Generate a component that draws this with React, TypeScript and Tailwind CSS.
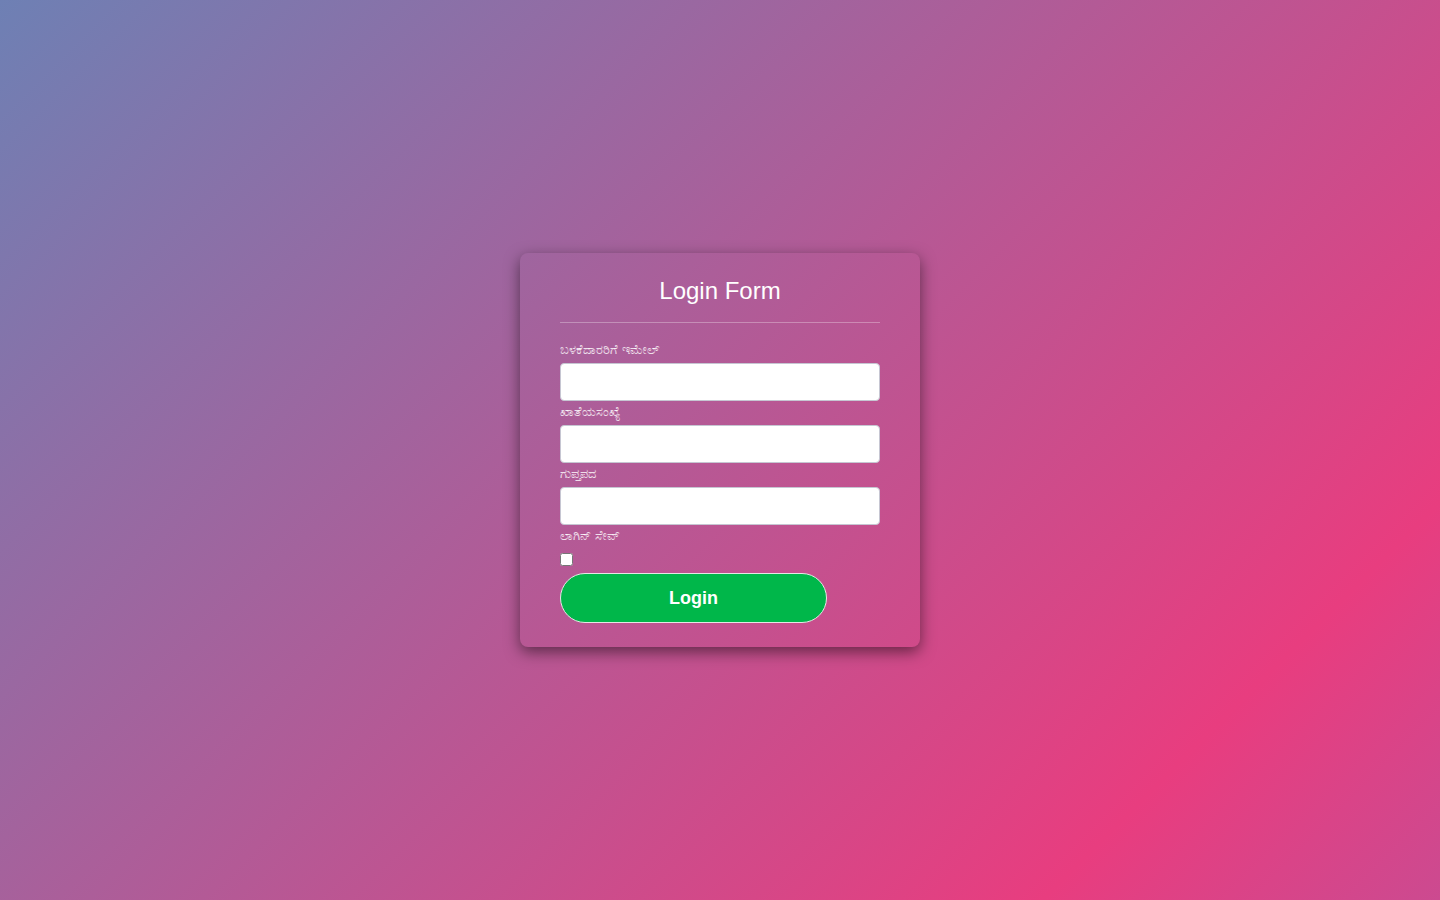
const fields = [
  { label: "ಬಳಕೆದಾರರಿಗೆ ಇಮೇಲ್", type: "text" },
  { label: "ಖಾತೆಯಸಂಖ್ಯೆ", type: "text" },
  { label: "ಗುಪ್ತಪದ", type: "password" },
];

const App = () => {
  return (
    <div className="min-h-screen w-full flex items-center justify-center bg-[linear-gradient(135deg,#6e80b4_0%,#e83d7f_83%,#cc4a90_100%)] font-['Liberation_Sans',Arial,sans-serif]">
      <div className="w-[400px] rounded-lg px-10 pt-[23px] pb-6 shadow-[0_5px_15px_rgba(0,0,0,0.5)]">
        <h2 className="text-2xl leading-[30px] text-white text-center">Login Form</h2>
        <div className="mt-[16px] h-px bg-white/30" />
        <form className="mt-[19px] flex flex-col" onSubmit={(e) => e.preventDefault()}>
          {fields.map((f, i) => (
            <div key={f.label} className={i === 0 ? "" : "mt-[3px]"}>
              <label className="block text-[13px] leading-4 text-white/80">{f.label}</label>
              <input
                type={f.type}
                className="mt-[5px] block w-full h-[38px] rounded bg-white border border-[#c6c6d2] px-3 text-sm outline-none"
              />
            </div>
          ))}
          <label className="mt-[3px] block text-[13px] leading-4 text-white/80">ಲಾಗಿನ್ ಸೇವ್</label>
          <div className="mt-[9px] flex">
            <input type="checkbox" className="w-[13px] h-[13px]" />
          </div>
          <button
            type="submit"
            className="mt-[7px] w-[267px] h-[50px] rounded-full bg-[#00b74a] border border-[#e6e6e6] text-white text-lg font-bold"
          >
            Login
          </button>
        </form>
      </div>
    </div>
  );
};

export default App;
